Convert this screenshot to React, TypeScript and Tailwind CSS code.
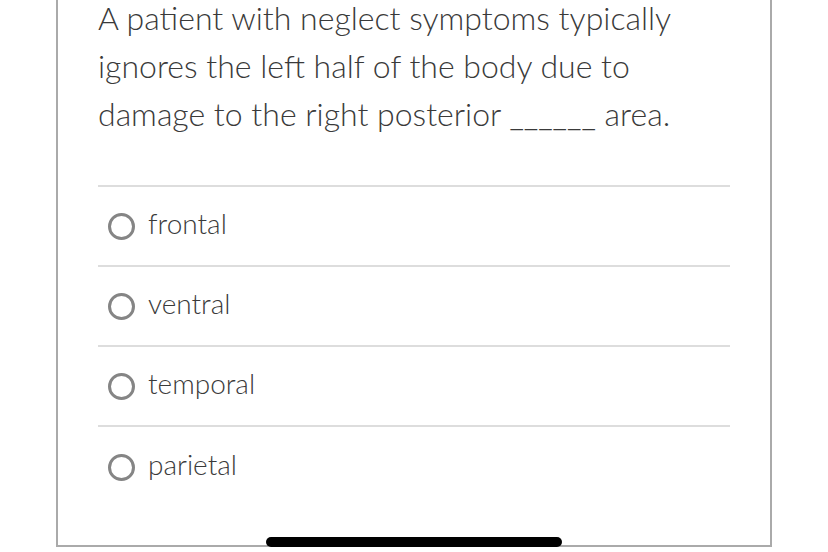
import React from "react";

const options = ["frontal", "ventral", "temporal", "parietal"];

export default function App() {
  return (
    <div className="relative w-[828px] h-[552px] overflow-hidden bg-white" style={{ fontFamily: "Lato, 'Open Sans', sans-serif" }}>
      <div className="ml-[56px] flex w-[716px] h-[547px] flex-col border-x-2 border-b-2 border-[#aaaaaa] pl-[40px] pr-[40px]">
        <p className="mt-[-6px] text-[32px] font-light leading-[48px] text-[#3a3a3a]">
          A patient with neglect symptoms typically
          <br />
          ignores the left half of the body due to
          <br />
          damage to the right posterior ______ area.
        </p>
        <div className="mt-[47px] border-t-2 border-[#dddddd]">
          {options.map((o, i) => (
            <div
              key={o}
              className={`flex h-[80px] items-center gap-[13px] pl-[10px] ${i < options.length - 1 ? "border-b-2 border-[#dddddd]" : ""}`}
            >
              <span className="block h-[27px] w-[27px] rounded-full border-[3px] border-[#858585]" />
              <span className="mt-[-6px] text-[28px] font-light text-[#3a3a3a]">{o}</span>
            </div>
          ))}
        </div>
      </div>
      <div className="absolute left-[266px] top-[537px] h-[10px] w-[296px] rounded-full bg-black" />
    </div>
  );
}
